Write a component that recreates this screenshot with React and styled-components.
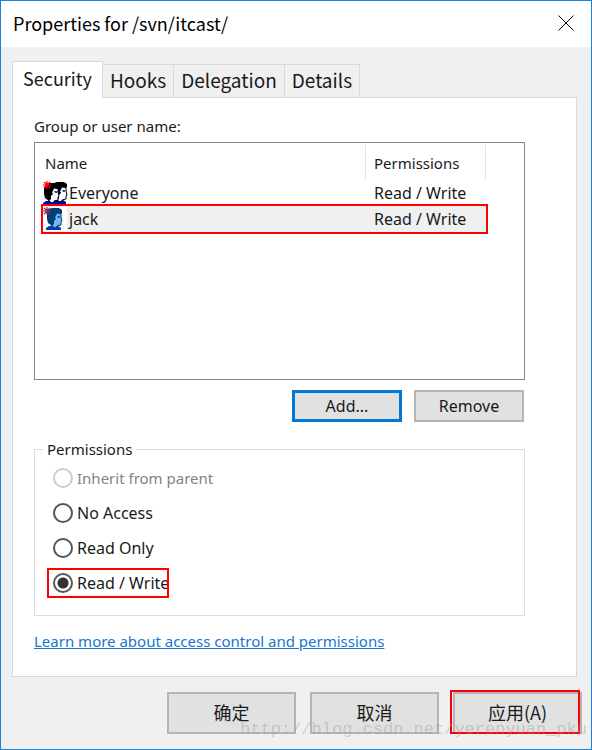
import React, { useState } from "react";
import styled, { createGlobalStyle, css } from "styled-components";

const GlobalStyle = createGlobalStyle`
  * {
    box-sizing: border-box;
  }

  body {
    margin: 0;
    background: #f0f0f0;
    color: #1a1a1a;
    font-family: "Noto Sans", "Noto Sans CJK SC", sans-serif;
    font-size: 16px;
    line-height: 24px;
  }

  button, input {
    font: inherit;
    color: inherit;
  }
`;

// red frame drawn over the things the reader should look at
const marked = css`
  position: relative;

  &::after {
    content: "";
    position: absolute;
    inset: ${(props) => props.$inset || "0"};
    border: 2px solid #fe0000;
    pointer-events: none;
  }
`;

const Window = styled.main`
  position: relative;
  min-height: 100vh;
  display: flex;
  flex-direction: column;
  border: 1px solid #1883d7;
`;

const TitleBar = styled.header`
  height: 46px;
  padding: 0 13px 2px 12px;
  display: flex;
  align-items: center;
  justify-content: space-between;
  background: #fff;
`;

const Title = styled.h1`
  margin: 0;
  color: #000;
  font-family: "Noto Sans CJK SC", sans-serif;
  font-size: 18px;
  font-weight: normal;
`;

const CloseButton = styled.button`
  width: 24px;
  height: 24px;
  padding: 0;
  display: flex;
  align-items: center;
  justify-content: center;
  border: 0;
  background: none;
`;

const Body = styled.div`
  flex: 1;
  padding: 14px 14px 0 11px;
`;

const TabList = styled.div`
  height: 36px;
  display: flex;
  align-items: flex-end;
`;

const Tab = styled.button`
  height: 33px;
  padding: 0 7px 2px;
  border: 1px solid #d9d9d9;
  border-width: 1px 1px 0 0;
  background: #f0f0f0;
  font-family: "Noto Sans CJK SC", sans-serif;
  font-size: 19px;

  ${(props) =>
    props.$active &&
    css`
      height: 37px;
      padding: 0 10px 4px;
      border-left-width: 1px;
      margin-bottom: -1px;
      background: #fff;
      font-size: 18px;
      z-index: 1;
    `}
`;

const Panel = styled.section`
  padding: 16px 51px 23px 21px;
  border: 1px solid #d9d9d9;
  background: #fff;
`;

const Label = styled.div`
  margin-bottom: 4px;
  font-size: 15px;
`;

const ListBox = styled.div`
  height: 238px;
  padding: 2px 0 2px 8px;
  border: 1px solid #828790;
`;

const Table = styled.table`
  width: calc(100% - 38px);
  table-layout: fixed;
  border-collapse: separate;
  border-spacing: 0;
`;

const HeadCell = styled.th`
  width: ${(props) => props.$width};
  height: 35px;
  padding: 0 8px;
  border-right: 1px solid #e5e5e5;
  font-size: 15px;
  font-weight: normal;
  text-align: left;

  &:first-child {
    padding-left: 2px;
  }
`;

const Row = styled.tr`
  background: ${(props) => (props.$selected ? "#f0f0f0" : "none")};
  outline: ${(props) => (props.$selected ? "2px solid #fe0000" : "none")};
`;

const Cell = styled.td`
  height: 26px;
  padding: 0 8px;

  &:first-child {
    padding-left: 0;
  }
`;

const User = styled.div`
  display: flex;
  align-items: center;
  gap: 1px;
`;

const ButtonRow = styled.div`
  display: flex;
  justify-content: flex-end;
  gap: 12px;
  padding: 10px 1px 0 0;
`;

const Button = styled.button`
  width: 110px;
  height: 32px;
  padding: 0;
  border: ${(props) =>
    props.$primary ? "3px solid #0078d7" : "2px solid #b5b5b5"};
  background: #e1e1e1;
`;

const Group = styled.fieldset`
  min-width: 0;
  height: 179px;
  margin: 15px 0 0;
  padding: 2px 12px;
  border: 1px solid #dcdcdc;
`;

const Legend = styled.legend`
  margin-left: -4px;
  padding: 0 4px;
  font-size: 15px;
`;

const Options = styled.div`
  display: flex;
  flex-direction: column;
  align-items: flex-start;
  gap: 5px;
`;

const Option = styled.label`
  height: 30px;
  padding-left: 6px;
  display: flex;
  align-items: center;
  gap: 4px;
  ${(props) =>
    props.$disabled &&
    css`
      color: #838383;
      font-size: 15px;
    `}
  ${(props) => props.$marked && marked}
`;

const Radio = styled.input`
  appearance: none;
  width: 20px;
  height: 20px;
  margin: 0;
  border: 2px solid #555;
  border-radius: 50%;
  background: #fff;

  &:checked {
    background: radial-gradient(#333 5px, #fff 6px);
  }

  &:disabled {
    border-color: #ccc;
  }
`;

const Link = styled.a`
  display: inline-block;
  margin-top: 13px;
  color: #1a75d1;
  font-size: 15px;
`;

const Footer = styled.footer`
  display: flex;
  justify-content: flex-end;
  gap: 14px;
  padding: 15px 9px;
`;

const FooterButton = styled.button`
  width: 129px;
  height: 42px;
  padding: 0 0 2px;
  border: 2px solid #b5b5b5;
  background: #e1e1e1;
  font-family: "Noto Sans CJK SC", sans-serif;
  font-size: 18px;
  ${(props) => props.$marked && marked}
`;

const Watermark = styled.div`
  position: absolute;
  right: 4px;
  bottom: 7px;
  color: rgba(150, 150, 140, 0.4);
  font-family: "Liberation Mono", monospace;
  font-size: 17px;
  pointer-events: none;
`;

function CloseIcon() {
  return (
    <svg width="16" height="16" viewBox="0 0 16 16" aria-hidden="true">
      <path d="M.5 .5l15 15M15.5 .5l-15 15" stroke="#000" fill="none" />
    </svg>
  );
}

function Head({ hair, face, eye, shirt }) {
  return (
    <g>
      <path d="M2 23v-2l3-2h9l3 2v2z" fill={shirt} />
      <path
        d="M9 6h8v4l1 4-1 1v3l-4 1v1l-2 1-3-2v-5z"
        fill={face}
        stroke={hair}
        strokeWidth="1"
      />
      <path
        d="M3 6l2-4 3-1h7l3 2v3l-2 1-3-1-1 3-1 1 1 2-2 2v3l-2 2-4-3-1-4z"
        fill={hair}
      />
      <path d="M13 9h3v2h-2z" fill={eye} />
    </g>
  );
}

function Star({ color }) {
  return (
    <path
      d="M4 0v8M0 4h8M1 1l6 6M7 1l-6 6"
      stroke={color}
      strokeWidth="1.2"
      fill="none"
    />
  );
}

function GroupIcon() {
  return (
    <svg width="25" height="24" viewBox="0 0 25 24" aria-hidden="true">
      <g transform="translate(6 0)">
        <Head hair="#000" face="#fff" eye="#33f" shirt="#0000b0" />
      </g>
      <g transform="translate(-2 1)">
        <Head hair="#000" face="#fff" eye="#33f" shirt="#0000c8" />
      </g>
      <Star color="#f00" />
    </svg>
  );
}

function UserIcon() {
  return (
    <svg width="25" height="24" viewBox="0 0 25 24" aria-hidden="true">
      <path d="M0 0h24v24h-24z" fill="#fff" />
      <g transform="translate(1 0)">
        <Head hair="#053e70" face="#6cb8f2" eye="#0a5fd8" shirt="#0038c0" />
      </g>
      <Star color="#85305c" />
    </svg>
  );
}

const TABS = ["Security", "Hooks", "Delegation", "Details"];

const USERS = [
  { name: "Everyone", access: "Read / Write", icon: <GroupIcon /> },
  { name: "jack", access: "Read / Write", icon: <UserIcon /> },
];

const OPTIONS = [
  { id: "inherit", label: "Inherit from parent", disabled: true },
  { id: "none", label: "No Access" },
  { id: "read", label: "Read Only" },
  { id: "write", label: "Read / Write", marked: true },
];

function UserTable({ selected, onSelect }) {
  return (
    <ListBox>
      <Table aria-labelledby="users-label">
        <thead>
          <tr>
            <HeadCell>Name</HeadCell>
            <HeadCell $width="120px">Permissions</HeadCell>
          </tr>
        </thead>
        <tbody>
          {USERS.map((user) => (
            <Row
              key={user.name}
              $selected={user.name === selected}
              onClick={() => onSelect(user.name)}
            >
              <Cell>
                <User>
                  {user.icon}
                  {user.name}
                </User>
              </Cell>
              <Cell>{user.access}</Cell>
            </Row>
          ))}
        </tbody>
      </Table>
    </ListBox>
  );
}

export default function App() {
  const [tab, setTab] = useState("Security");
  const [user, setUser] = useState("jack");
  const [access, setAccess] = useState("write");

  return (
    <Window>
      <GlobalStyle />
      <TitleBar>
        <Title>Properties for /svn/itcast/</Title>
        <CloseButton aria-label="Close">
          <CloseIcon />
        </CloseButton>
      </TitleBar>
      <Body>
        <TabList role="tablist">
          {TABS.map((name) => (
            <Tab
              key={name}
              role="tab"
              aria-selected={name === tab}
              $active={name === tab}
              onClick={() => setTab(name)}
            >
              {name}
            </Tab>
          ))}
        </TabList>
        <Panel>
          <Label id="users-label">Group or user name:</Label>
          <UserTable selected={user} onSelect={setUser} />
          <ButtonRow>
            <Button $primary>Add...</Button>
            <Button>Remove</Button>
          </ButtonRow>
          <Group>
            <Legend>Permissions</Legend>
            <Options>
              {OPTIONS.map((option) => (
                <Option
                  key={option.id}
                  htmlFor={option.id}
                  $disabled={option.disabled}
                  $marked={option.marked}
                >
                  <Radio
                    type="radio"
                    name="access"
                    id={option.id}
                    disabled={option.disabled}
                    checked={option.id === access}
                    onChange={() => setAccess(option.id)}
                  />
                  {option.label}
                </Option>
              ))}
            </Options>
          </Group>
          <Link href="#learn-more">
            Learn more about access control and permissions
          </Link>
        </Panel>
      </Body>
      <Footer>
        <FooterButton>确定</FooterButton>
        <FooterButton>取消</FooterButton>
        <FooterButton $marked $inset="-4px 0 -2px -5px">
          应用(A)
        </FooterButton>
      </Footer>
      <Watermark>http://blog.csdn.net/yerenyuan_pku</Watermark>
    </Window>
  );
}
